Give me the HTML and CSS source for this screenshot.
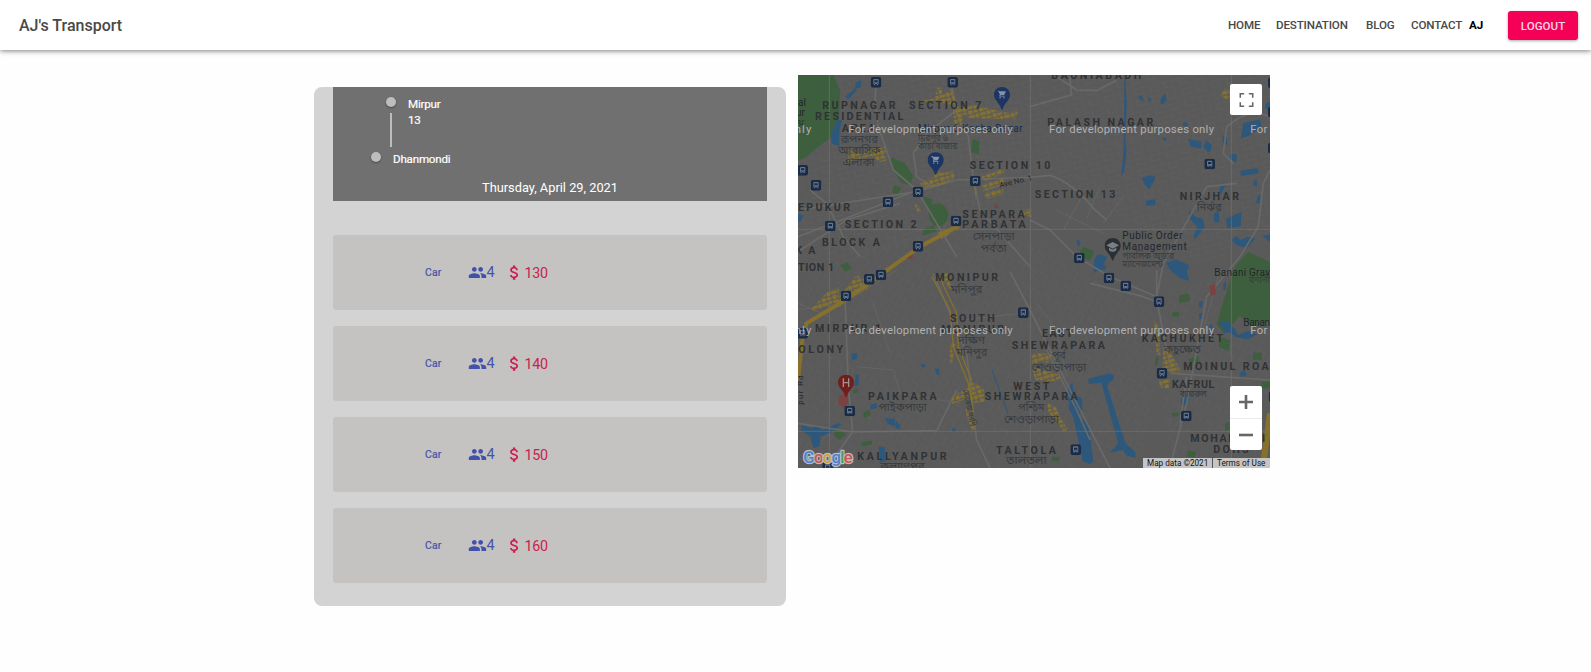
FILE: index.html
```html
<!DOCTYPE html>
<html lang="en">
<head>
<meta charset="utf-8">
<title>AJ's Transport</title>
<link rel="stylesheet" href="styles.css">
</head>
<body>
<svg class="defs" aria-hidden="true">
  <symbol id="people" viewBox="0 0 24 24"><path d="M16 11c1.66 0 2.99-1.34 2.99-3S17.66 5 16 5c-1.66 0-3 1.34-3 3s1.34 3 3 3zm-8 0c1.66 0 2.99-1.34 2.99-3S9.66 5 8 5C6.34 5 5 6.34 5 8s1.34 3 3 3zm0 2c-2.33 0-7 1.17-7 3.5V19h14v-2.5c0-2.33-4.67-3.5-7-3.5zm8 0c-.29 0-.62.02-.97.05 1.16.84 1.97 1.97 1.97 3.45V19h6v-2.5c0-2.33-4.67-3.5-7-3.5z"/></symbol>
  <symbol id="money" viewBox="0 0 24 24"><path d="M11.8 10.9c-2.27-.59-3-1.2-3-2.15 0-1.09 1.01-1.85 2.7-1.85 1.78 0 2.44.85 2.5 2.1h2.21c-.07-1.72-1.12-3.3-3.21-3.81V3h-3v2.16c-1.94.42-3.5 1.68-3.5 3.61 0 2.31 1.91 3.46 4.7 4.13 2.5.6 3 1.48 3 2.41 0 .69-.49 1.79-2.7 1.79-2.06 0-2.87-.92-2.98-2.1h-2.2c.12 2.19 1.76 3.42 3.68 3.83V21h3v-2.15c1.95-.37 3.5-1.5 3.5-3.55 0-2.84-2.43-3.81-4.7-4.4z"/></symbol>
  <symbol id="bus" viewBox="0 0 32 32"><rect width="32" height="32" rx="7" fill="#1a2b45"/><path d="M8 9q0-3 3-3h10q3 0 3 3v13h-2v3h-3v-3h-6v3h-3v-3H8z" fill="#65758c"/><path d="M11 10h10v6H11zM10.500 18h2.500v2h-2.500zM19 18h2.500v2H19z" fill="#1a2b45"/></symbol>
  <symbol id="pin" viewBox="0 0 50 70"><path d="M25 1C11 1 1 11 1 24c0 17 16 22 22 43q2 4 4 0c6-21 22-26 22-43C49 11 39 1 25 1z"/></symbol>
  <symbol id="cart" viewBox="0 0 24 24"><path fill="#8793a8" d="M7 18c-1.100 0-2 .9-2 2s.9 2 2 2 2-.9 2-2-.9-2-2-2zM1 2v2h2l3.600 7.600L5.200 14c-.7 1.300.3 3 1.800 3h12v-2H7.400l1.100-2h7.500c.7 0 1.400-.4 1.700-1L21.500 5c.4-.7-.1-1.500-.9-1.500H5.200L4.300 2zm16 16c-1.100 0-2 .9-2 2s.9 2 2 2 2-.9 2-2-.9-2-2-2z"/></symbol>
</svg>

<header class="navbar">
  <div class="brand">AJ's Transport</div>
  <nav class="menu">
    <a class="link home">HOME</a>
    <a class="link destination">DESTINATION</a>
    <a class="link blog">BLOG</a>
    <a class="link contact">CONTACT</a>
    <a class="user">AJ</a>
    <button class="logout">LOGOUT</button>
  </nav>
</header>

<main class="content">
  <section class="panel">
    <div class="trip">
      <div class="stop from"><div class="rail"><i class="dot"></i><i class="connector"></i></div><span>Mirpur<br>13</span></div>
      <div class="stop to"><div class="rail"><i class="dot"></i></div><span>Dhanmondi</span></div>
      <div class="date">Thursday, April 29, 2021</div>
    </div>
    <div class="rides">
      <div class="ride"><span class="kind">Car</span><svg class="icon seats"><use href="#people"/></svg><span class="count">4</span><svg class="icon fare"><use href="#money"/></svg><span class="price">130</span></div>
      <div class="ride"><span class="kind">Car</span><svg class="icon seats"><use href="#people"/></svg><span class="count">4</span><svg class="icon fare"><use href="#money"/></svg><span class="price">140</span></div>
      <div class="ride"><span class="kind">Car</span><svg class="icon seats"><use href="#people"/></svg><span class="count">4</span><svg class="icon fare"><use href="#money"/></svg><span class="price">150</span></div>
      <div class="ride"><span class="kind">Car</span><svg class="icon seats"><use href="#people"/></svg><span class="count">4</span><svg class="icon fare"><use href="#money"/></svg><span class="price">160</span></div>
    </div>
  </section>

  <section class="map">
    <svg class="tiles" viewBox="24 15 1416 1179">
      <defs>
        <pattern id="streetsA" width="46" height="34" patternUnits="userSpaceOnUse" patternTransform="rotate(-14)"><path d="M0 0H46M0 0V34M22 0V18M22 18H46" class="minor"/></pattern>
        <pattern id="streetsB" width="38" height="52" patternUnits="userSpaceOnUse" patternTransform="rotate(28)"><path d="M0 0H38M0 0V52M0 28H22M22 28V52" class="minor"/></pattern>
        <pattern id="streetsC" width="22" height="17" patternUnits="userSpaceOnUse" patternTransform="rotate(4)"><path d="M0 0H22M0 0V17" class="minor"/></pattern>
        <pattern id="blocks" width="34" height="28" patternUnits="userSpaceOnUse" patternTransform="rotate(-16)"><path d="M1 1h18v9H1zM22 0h10v12H22zM3 14h12v11H3zM18 16h14v8H18z" fill="#86722f"/></pattern>
      </defs>
      <rect x="24" y="15" width="1416" height="1179" fill="#5a5a5a"/>
      <path fill="url(#streetsA)" d="M150 15H720V330L500 480 24 620V250z"/>
      <path fill="url(#streetsC)" d="M380 90H710V470L500 440 370 330z"/>
      <path fill="url(#streetsB)" d="M24 640L440 440 900 560 1120 760 1060 1194H24z"/>
      <path fill="url(#streetsA)" d="M720 15H1440V500L1240 580 940 420 720 300z"/>
      <path fill="url(#streetsB)" d="M1110 680L1440 560V1194H1130z"/>

      <g class="green">
        <path d="M24 15H130L150 60 148 130 125 200 80 235 50 260 24 272z"/>
        <path d="M303 262L345 280 370 318 360 345 334 338 308 300zM312 345l22 8-10 22-18-8zM400 380l28 8-5 25-22-8z"/>
        <path d="M416 410q20-16 42-6 24 18 14 46-14 24-38 18-24-20-18-58zM400 478l30-12 10 18-42 14zM548 208l20 6-2 40-22-8zM150 585l22-8 14 18-20 10z"/>
        <path d="M880 530l32 14-10 28-40-15zM1335 588l40-42 65 30v176l-50 22-40-36-48 52-22-26 20-70z"/>
        <path d="M1168 676l28-6 4 24-34 4zM1148 725l20 2-2 14-20-2zM1290 800l30 10-4 32-30-10zM1390 848h26v22h-28zM1196 866l30-8v18l-28 4zM1414 935h26v20h-26zM1146 1030l20-4v12l-20 2zM1196 1142l24 4-6 16-26-2zM132 1080l26 0 10 16-20 14-14-12zM214 1116l32-4v12l-30 5zM190 960l14-4v12l-12 3zM220 1028l18-8 4 16-20 8zM1098 858l8 4-4 26-8-4zM786 1160l24 2-4 12-22-2zM1305 1062l14-6v22l-14 6z"/>
      </g>
      <g class="water">
        <path d="M124 188l18-38 14 0-8 36 0 44-24-10zM196 38l18-8-2 22-16 4zM24 432l16 4-8 18-8 2zM166 80l30-26 4 6-24 28z"/>
        <path d="M1003 26l4 0 3 80-4 100 4 40-8 60-8 14 6-70 2-100zM1044 80l10-4 8 18-10-4zM1072 80l12 8-6 8zM1112 86l14-16 4 18-10 16-8-4zM1056 324l22-8 20 6-20 36-14-14zM1068 392l28-4v16l-28 4zM1120 202l10 4-4 8-8-4zM1182 156l14 6-8 8-12-6z"/>
        <path d="M1194 206l42 10-4 20-30-6zM1240 230l8-20 18 16-6 22-10-4zM1352 302l50-8 4 16-54 8zM1298 196l12 6 2 22-14-6zM1392 330l10 2-2 18-10-4zM1404 376l8 2-4 24-10-4zM1322 248l20 8-4 22-18-12zM1294 340l12 6-16 32-6 0zM1360 160l50-12 4 24-34 24-28 10zM1426 102l14-8v28l-14-6zM1196 420l20 20 22 6 6 24-28 38-6-6 12-32-20-20zM1270 432l16-8 2 30-14 6zM1308 446l46-20-2 44-40 4zM1326 510l12-12 14 12 22-10 22 6-26 28-30-8zM1418 498l22-6v24zM912 570l12-18 28 8-18 36-24 14z"/>
        <path d="M1128 578l30-10 40 18-8 18 8 28-26-6-32-26zM864 506l8 14-6 10-6-14zM926 584l24 2-4 14-22-2zM1228 694l10 0-2 20-10-4zM1228 732l8-4 4 12-12 10zM1300 640l8-6v22l-8 6z"/>
        <path d="M1290 755l26-2 28 42 30-12 28 10-28 15-36-6-50-38zM1258 764l10 0-2 18-8 2zM1298 780l18-8 24 6-10 8-28 4zM1350 908l14-8 6 16-18 6zM1175 986l18-10 6 12-16 20-10-8z"/>
        <path d="M838 948l10-10 2 20 8 18 18 10 2 32-12 20 30 24 14 112-10 8-22-8-28-132-14-26 4-16-12-20zM896 926l62-16 14 6-2 14-14 8-4 12 54 170 30 26 0 18-28-8-8-16-42 8 22-22 4-10-50-178-38 4z"/>
        <path d="M184 852l18-4-2 18-14 6zM394 880l14 6-6 8-10-6zM436 894l12 4 0 18-10-4zM196 915l10-2 0 32-12 4zM36 1066l30 8 12-8 20 14 46-20 12 2-30 24-34 14-4 30-18 4-8-34-30-20zM240 1006l20-6 2 14-20 4zM284 1044l30 2 4 24-24-8zM318 1052l14 14-4 12-10-4zM266 1130l18 0 2 44-16 2zM488 1074l10 2-4 12-8-4z"/>
        <path d="M608 900l48 132-3 1-48-132z"/>
      </g>

      <g class="road">
        <path d="M24 420L380 365 500 330 720 322 780 316 Q850 340 910 415L950 450"/>
        <path d="M260 20L255 90 265 170 310 300 380 360 500 560"/>
        <path d="M24 500L180 440 420 345 380 320 370 250 410 190 500 120"/>
        <path d="M60 360L110 400 160 500 210 560M24 545L170 450 330 400"/>
        <path d="M480 20L500 130 535 200 550 330 570 420 720 590"/>
        <path d="M720 450L780 480 860 560 960 620 1100 680 1120 580 1250 350 1340 340"/>
        <path d="M720 110L844 75 840 20M800 20L860 60 920 62 980 30"/>
        <path d="M1440 140Q1380 110 1310 170L1300 250 1330 280M1440 300L1420 340 1405 470 1350 560 1250 680 1190 1000 1140 1190"/>
        <path d="M1100 600L1100 690 1120 790 1145 910 1440 930M1190 920L1170 1060M900 640L1060 680 1110 700"/>
        <path d="M165 670L175 950 188 1085 110 1194M24 1060L188 1086 440 1082 500 960"/>
        <path d="M430 610L530 850 560 1110 600 1194M660 605L720 720 850 980 960 1194M770 840L860 1020 900 1110"/>
      </g>
      <g class="road lane">
        <path d="M890 445L930 350M940 460L1000 380M820 480L870 390M800 420L940 490M200 890L310 900 330 970 510 1000M740 700L800 780 830 920M520 750L690 730M24 720L160 700 320 600M1290 600L1240 780M24 700L120 740M250 700L300 850"/>
      </g>
      <g class="tile-edge"><path d="M118 15V1194M721 15V1194M1324 15V1194M24 478H1440M24 1084H1440"/></g>

      <g class="highway">
        <path d="M24 930L38 800 50 760 166 690 390 530 500 470"/>
        <path d="M1440 1030L1418 1194" class="wide"/>
        <path d="M426 620L480 720 490 830 535 940 556 1070M448 620L500 730 505 830 545 930" class="thin"/>
      </g>
      <g class="yellow">
        <path d="M62 720l50-54 34-14 0 30 54-66 36 20-6 24-70 30-10 24-20-16-56 26zM440 490l60-28 14 10-60 36zM380 400l14 26-10 4-10-26zM176 232l40 24 24-20 46-6 4 42-20 4-26-18-70 16z"/>
        <path d="M384 94l50-8 8-34 12 2 4 22 26-20 20 54 60-4-12 24-30 0-12 42-16-6-6-60-54-12zM520 130l60-18 70 16 34-8-6 26-80 0-60-2zM390 338l40-16 10-24 14 12 36-6 4 22-44 20-52 8zM574 320l60-22 12 10-60 24zM574 342l66-18v20l-60 20zM580 370l60-16v18l-50 14zM552 350l10 4-6 34z"/>
        <path d="M456 612l20-2 8 50-22-20zM482 816l14 6-10 60-8-6zM484 980l50-26 8-24 40 28 4 36-40 6-10-16-50 18zM528 1010l28 70-10 4-20-56zM724 854l20-6 6 28-22 8zM738 850l50 2-14 26-24-4zM726 892l60 14 30 14-20 14-60-4zM774 1000l22 10 36 68-12 8-20-38-26-20zM700 420l26-6v28l-24-6zM1092 756l12 4 8 98-12-10zM1120 828l16 8 30 56 8 14-24 2-32-10zM1106 928l34 0-4 30-26-6zM1290 78l16-24 16 12v26z"/>
      </g>
      <g fill="#7c4141"><path d="M148 976l26-4 0 28-14 14-16-14zM1258 648l18-6 0 34-14 0zM612 414l6-14 8 14zM350 564l18-10v12z"/></g>

      <g class="area">
        <text x="97" y="117" textLength="220">RUPNAGAR</text><text x="75" y="151" textLength="265">RESIDENTIAL</text><text x="155" y="187" textLength="100">AREA</text>
        <text x="357" y="116" textLength="217">SECTION 7</text><text x="539" y="296" textLength="242">SECTION 10</text>
        <text x="784" y="28" textLength="270">BAUNIABADH</text><text x="772" y="167" textLength="318">PALASH NAGAR</text>
        <text x="734" y="385" textLength="242">SECTION 13</text><text x="1169" y="391" textLength="178">NIRJHAR</text>
        <text x="24" y="422" textLength="156">EPUKUR</text><text x="164" y="474" textLength="216">SECTION 2</text><text x="96" y="528" textLength="174">BLOCK A</text><text x="16" y="552" textLength="60">K A</text><text x="24" y="604" textLength="108">TION 1</text>
        <text x="517" y="443" textLength="187">SENPARA</text><text x="517" y="475" textLength="190">PARBATA</text>
        <text x="436" y="634" textLength="188">MONIPUR</text><text x="480" y="756" textLength="134">SOUTH</text><text x="454" y="790" textLength="188">MONIPUR</text>
        <text x="75" y="786" textLength="198">MIRPUR 1</text><text x="25" y="850" textLength="134">OLONY</text>
        <text x="234" y="991" textLength="206">PAIKPARA</text><text x="202" y="1169" textLength="268">KALLYANPUR</text>
        <text x="756" y="802" textLength="92">EAST</text><text x="665" y="836" textLength="280">SHEWRAPARA</text>
        <text x="670" y="959" textLength="108">WEST</text><text x="584" y="991" textLength="279">SHEWRAPARA</text>
        <text x="618" y="1151" textLength="180">TALTOLA</text><text x="1055" y="816" textLength="244">KACHUKHET</text>
        <text x="1180" y="901" textLength="256">MOINUL ROA</text><text x="1146" y="955" textLength="127">KAFRUL</text>
        <text x="1201" y="1116" textLength="224">MOHAKHALI</text><text x="1270" y="1150" textLength="106">DOHS</text>
      </g>
      <g class="bangla">
        <text x="152" y="219" textLength="112" lengthAdjust="spacingAndGlyphs">রূপনগর</text><text x="145" y="253" textLength="126" lengthAdjust="spacingAndGlyphs">আবাসিক</text><text x="158" y="287" textLength="96" lengthAdjust="spacingAndGlyphs">এলাকা</text>
        <text x="548" y="509" textLength="126" lengthAdjust="spacingAndGlyphs">সেনপাড়া</text><text x="572" y="545" textLength="78" lengthAdjust="spacingAndGlyphs">পর্বতা</text>
        <text x="482" y="670" textLength="95" lengthAdjust="spacingAndGlyphs">মনিপুর</text><text x="505" y="822" textLength="80" lengthAdjust="spacingAndGlyphs">দক্ষিণ</text><text x="499" y="857" textLength="93" lengthAdjust="spacingAndGlyphs">মনিপুর</text>
        <text x="266" y="1023" textLength="144" lengthAdjust="spacingAndGlyphs">পাইকপাড়া</text><text x="270" y="1200" textLength="134" lengthAdjust="spacingAndGlyphs">কল্যাণপুর</text>
        <text x="785" y="868" textLength="42" lengthAdjust="spacingAndGlyphs">পূর্ব</text><text x="725" y="903" textLength="164" lengthAdjust="spacingAndGlyphs">শেওড়াপাড়া</text>
        <text x="685" y="1024" textLength="78" lengthAdjust="spacingAndGlyphs">পশ্চিম</text><text x="643" y="1060" textLength="164" lengthAdjust="spacingAndGlyphs">শেওড়াপাড়া</text><text x="648" y="1183" textLength="122" lengthAdjust="spacingAndGlyphs">তালতলা</text>
        <text x="1220" y="422" textLength="75" lengthAdjust="spacingAndGlyphs">নির্ঝর</text><text x="1122" y="848" textLength="110" lengthAdjust="spacingAndGlyphs">কচুক্ষেত</text>
        <g class="small"><text x="384" y="212" textLength="90" lengthAdjust="spacingAndGlyphs">মিরপুর ৬</text><text x="384" y="238" textLength="118" lengthAdjust="spacingAndGlyphs">কাঁচা বাজার</text><text x="997" y="567" textLength="155" lengthAdjust="spacingAndGlyphs">পাবলিক অর্ডার</text><text x="997" y="591" textLength="122" lengthAdjust="spacingAndGlyphs">ম্যানেজমেন্ট</text><text x="1170" y="980" textLength="80" lengthAdjust="spacingAndGlyphs">কাফরুল</text><text x="1376" y="640" textLength="64" lengthAdjust="spacingAndGlyphs">বনানী</text><text transform="translate(518 960) rotate(78)" textLength="112" lengthAdjust="spacingAndGlyphs">রোকেয়া সরণি</text></g>
      </g>
      <g class="place">
        <text x="384" y="186" textLength="314" fill="#182c4b">Mirpur 6 Kacha Bazar</text>
        <text x="997" y="507" textLength="180">Public Order</text><text x="997" y="540" textLength="193">Management</text>
        <text x="1273" y="618" textLength="167">Banani Grav</text><text x="1360" y="768" textLength="80">Banan</text>
        <text x="24" y="107">al</text><text x="18" y="138">ur</text><text x="24" y="167">য়</text>
        <text transform="translate(630 353) rotate(-13)" class="street" textLength="100">Ave No. 1</text>
        <text transform="translate(38 1004) rotate(-90)" class="street" textLength="88">pur Rd</text>
      </g>

      <g>
        <use href="#bus" x="242" y="21" width="32" height="32"/><use href="#bus" x="472" y="21" width="32" height="32"/>
        <use href="#bus" x="22" y="285" width="32" height="32"/><use href="#bus" x="62" y="330" width="32" height="32"/>
        <use href="#bus" x="278" y="380" width="32" height="32"/><use href="#bus" x="368" y="350" width="32" height="32"/>
        <use href="#bus" x="540" y="317" width="32" height="32"/><use href="#bus" x="482" y="437" width="32" height="32"/>
        <use href="#bus" x="105" y="452" width="32" height="32"/><use href="#bus" x="368" y="513" width="32" height="32"/>
        <use href="#bus" x="1243" y="266" width="32" height="32"/><use href="#bus" x="852" y="548" width="32" height="32"/>
        <use href="#bus" x="222" y="612" width="32" height="32"/><use href="#bus" x="257" y="599" width="32" height="32"/>
        <use href="#bus" x="152" y="662" width="32" height="32"/><use href="#bus" x="684" y="712" width="32" height="32"/>
        <use href="#bus" x="22" y="774" width="32" height="32"/><use href="#bus" x="163" y="1007" width="32" height="32"/>
        <use href="#bus" x="941" y="608" width="32" height="32"/><use href="#bus" x="991" y="632" width="32" height="32"/>
        <use href="#bus" x="1091" y="679" width="32" height="32"/><use href="#bus" x="1100" y="894" width="32" height="32"/>
        <use href="#bus" x="1173" y="1022" width="32" height="32"/><use href="#bus" x="841" y="1123" width="32" height="32"/>
        <use href="#bus" x="1434" y="22" width="32" height="32"/><use href="#bus" x="1434" y="110" width="32" height="32"/><use href="#bus" x="1434" y="218" width="32" height="32"/><use href="#bus" x="1436" y="964" width="32" height="32"/>
        <use href="#bus" x="97" y="1177" width="32" height="32"/>
      </g>
      <g>
        <use href="#pin" x="611" y="50" width="50" height="70" fill="#1d3563"/><use href="#cart" x="622" y="60" width="28" height="28"/>
        <use href="#pin" x="412" y="246" width="50" height="70" fill="#1d3563"/><use href="#cart" x="423" y="256" width="28" height="28"/>
        <use href="#pin" x="943" y="503" width="50" height="70" fill="#2b3035"/><path d="M949 526l19-10 19 10-19 10zM957 533v8q11 9 22 0v-8l-11 6z" fill="#7b8086"/>
        <use href="#pin" x="143" y="913" width="50" height="70" fill="#701f1d"/><path d="M160 925v26M176 925v26M160 938h16" stroke="#a39090" stroke-width="4"/>
      </g>
      <g class="watermark">
        <text x="14" y="189" textLength="50">nly</text><text x="175" y="189" textLength="493">For development purposes only</text><text x="777" y="189" textLength="495">For development purposes only</text><text x="1381" y="189" textLength="51">For</text>
        <text x="14" y="793" textLength="50">nly</text><text x="175" y="793" textLength="493">For development purposes only</text><text x="777" y="793" textLength="495">For development purposes only</text><text x="1381" y="793" textLength="51">For</text>
      </g>
      <text class="google" x="40" y="1178" textLength="148"><tspan fill="#4f82cc">G</tspan><tspan fill="#c8564b">o</tspan><tspan fill="#c9a23a">o</tspan><tspan fill="#4f82cc">g</tspan><tspan fill="#4b9a62">l</tspan><tspan fill="#c8564b">e</tspan></text>
    </svg>
    <div class="fullscreen"><svg viewBox="0 0 18 18"><path d="M0 0v6h2V2h4V0H0zm16 0h-4v2h4v4h2V0h-2zm0 16h-4v2h6v-6h-2v4zM2 12H0v6h6v-2H2v-4z"/></svg></div>
    <div class="zoom">
      <div class="zoom-btn"><svg viewBox="0 0 14 14"><path d="M5.700 0h2.600v5.700H14v2.600H8.300V14H5.700V8.300H0V5.700h5.700z"/></svg></div>
      <div class="zoom-btn"><svg viewBox="0 0 14 14"><path d="M0 5.700h14v2.600H0z"/></svg></div>
    </div>
    <div class="legal"><span class="data">Map data ©2021</span><span class="terms">Terms of Use</span></div>
  </section>
</main>
</body>
</html>
```
FILE: styles.css
```css
* { box-sizing: border-box; }
body { margin: 0; background: #fefefe; font-family: Roboto, "Liberation Sans", sans-serif; }
.defs { display: none; }

.navbar { display: flex; justify-content: space-between; align-items: center; height: 50px; padding: 0 13px 0 19px; background: #fff; box-shadow: 0 1px 5px rgba(0,0,0,.5); }
.brand { font-size: 16px; font-weight: 500; color: #484848; }
.menu { display: flex; align-items: center; font-size: 11.600px; white-space: nowrap; }
.link { color: #484848; font-weight: 500; letter-spacing: -.15px; }
.home { width: 48px; }
.destination { width: 90px; }
.blog { width: 45px; }
.contact { width: 58px; }
.user { width: 39px; font-weight: 700; color: #000; }
.logout { width: 70px; height: 29px; margin-top: 1px; padding: 0; border: 0; border-radius: 3px; background: #f50057; color: #fbdbe6; font: 500 11.600px Roboto, sans-serif; box-shadow: 0 1px 3px rgba(0,0,0,.35); }

.content { display: flex; align-items: flex-start; gap: 12px; padding: 25px 0 0 314px; }
.panel { width: 472px; height: 518.500px; margin-top: 12px; padding: 0 19px; border-radius: 8px; background: #d3d3d3; }
.trip { height: 114px; padding: 10px 0 0; background: #707070; color: #fff; font-size: 11.600px; line-height: 16px; }
.stop { display: flex; align-items: flex-start; gap: 12px; }
.from { height: 55px; padding-left: 53px; }
.to { height: 28px; padding-left: 38px; }
.stop span { margin-top: -1px; letter-spacing: -.2px; -webkit-text-stroke: .2px #fff; }
.dot { width: 10px; height: 10px; border-radius: 50%; background: #bdbdbd; box-shadow: 0 1px 2px rgba(0,0,0,.35); }
.rail { display: flex; flex-direction: column; align-items: center; width: 10px; }
.connector { width: 2px; height: 34px; margin-top: 6px; background: #bdbdbd; }
.date { font-size: 12.800px; text-align: center; }
.rides { display: flex; flex-direction: column; gap: 16px; margin-top: 34px; }
.ride { display: flex; align-items: center; height: 75px; padding-left: 92px; border-radius: 3px; background: #c4c3c1; color: #4553a8; }
.kind { width: 42.500px; font-size: 10.400px; letter-spacing: .2px; -webkit-text-stroke: .2px #4553a8; }
.icon { width: 19px; height: 19px; }
.seats { fill: #4252ab; }
.count { width: 18px; font-size: 14.500px; -webkit-text-stroke: 0; }
.fare { fill: #cb1d50; }
.price { margin-left: 1px; font-size: 14.300px; letter-spacing: -.3px; color: #cb1d50; }

.map { position: relative; width: 472px; height: 393px; overflow: hidden; }
.tiles { display: block; width: 472px; height: 393px; }
.minor { fill: none; stroke: #626262; stroke-width: 1.500; }
.green { fill: #3e5f3e; }
.water { fill: #2d587c; }
.road { fill: none; stroke: #696969; stroke-width: 5; stroke-linejoin: round; }
.lane { stroke-width: 3; stroke: #656565; }
.tile-edge { fill: none; stroke: #727272; stroke-width: 2; }
.highway { fill: none; stroke: #86702b; stroke-width: 12; stroke-linejoin: round; }
.highway .wide { stroke-width: 18; }
.highway .thin { stroke-width: 4; }
.yellow { fill: url(#blocks); }
.area { fill: #303234; font-size: 32px; font-weight: 700; }
.bangla { fill: #393c3f; font-family: "Noto Sans Bengali", "Noto Sans", sans-serif; font-size: 34px; }
.small { font-size: 26px; }
.place { fill: #22262a; font-size: 30px; }
.street { font-size: 23px; }
.watermark { fill: #b1b1b1; font-family: Roboto, sans-serif; font-size: 34px; }
.google { font-size: 50px; font-weight: 500; stroke: #b9bec6; stroke-width: 7; stroke-linejoin: round; paint-order: stroke; }
.fullscreen { position: absolute; top: 9px; right: 8px; display: flex; align-items: center; justify-content: center; width: 32px; height: 31px; border-radius: 2px; background: #fff; }
.fullscreen svg { width: 15px; height: 14px; fill: #666; }
.zoom { position: absolute; right: 8px; bottom: 18px; width: 32px; height: 64px; border-radius: 2px; background: #fff; }
.zoom-btn { display: flex; align-items: center; justify-content: center; height: 32px; }
.zoom-btn + .zoom-btn { border-top: 1px solid #e9e9e9; }
.zoom-btn svg { width: 14px; height: 14px; fill: #666; }
.legal { position: absolute; right: 0; bottom: 0; display: flex; width: 127px; height: 10px; background: #c5c5c5; color: #111; font-size: 8.200px; line-height: 10px; white-space: nowrap; }
.data { width: 70px; padding-left: 4px; border-right: 1px solid #555; }
.terms { padding-left: 4px; }
```
